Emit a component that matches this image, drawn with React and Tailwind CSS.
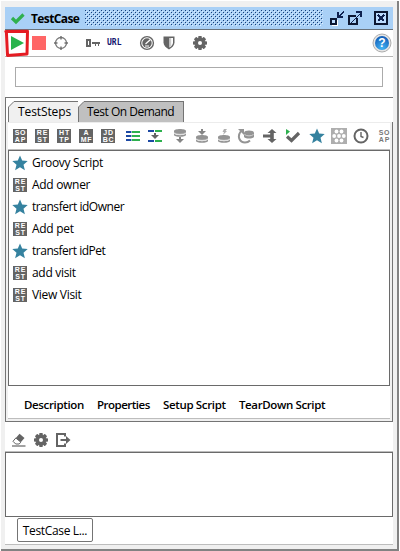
import React from "react";

const Star = () => (
  <svg className="size-4 shrink-0" viewBox="0 0 16 16">
    <path fill="#35829f" d="M8 .6l2.200 4.900 5.500.4-4.200 3.800 1.400 5.500L8 12.300l-4.900 2.900 1.400-5.500L.3 5.900l5.500-.4z" />
  </svg>
);

const Chip = ({ a, b, ghost }) => (
  <span
    className={
      "flex h-[14px] w-[14px] shrink-0 flex-col items-center justify-center gap-px font-['Liberation_Sans',sans-serif] text-[7px] leading-[6px] font-bold tracking-[0.8px] " +
      (ghost ? "text-[#777]" : "bg-[#646464] text-white")
    }
  >
    <span className="block pl-px">{a}</span>
    <span className="block pl-px">{b}</span>
  </span>
);

const Gear = () => (
  <svg className="size-[14px] shrink-0" viewBox="0 0 14 14">
    <g fill="#646464">
      <rect x="5.200" width="3.600" height="14" rx=".8" />
      <rect x="5.200" width="3.600" height="14" rx=".8" transform="rotate(45 7 7)" />
      <rect x="5.200" width="3.600" height="14" rx=".8" transform="rotate(90 7 7)" />
      <rect x="5.200" width="3.600" height="14" rx=".8" transform="rotate(135 7 7)" />
      <circle cx="7" cy="7" r="5.200" />
    </g>
    <circle cx="7" cy="7" r="2" fill="#fff" />
  </svg>
);

const Disk = ({ y }) => (
  <g fill="#949494">
    <path d={`M2 ${y + 2}c0-2.7 12-2.7 12 0v1.3c0 2.7-12 2.7-12 0z`} />
    <path d={`M2 ${y + 4.5}c2 2.2 10 2.2 12 0v1.3c0 2.7-12 2.7-12 0z`} />
    <path d={`M2.3 ${y + 3.8}c2 2 9.4 2 11.4 0`} fill="none" stroke="#ddd" strokeWidth=".7" />
  </g>
);

const Icon = ({ children, className = "" }) => (
  <svg className={"h-4 w-4 shrink-0 " + className} viewBox="0 0 16 16">{children}</svg>
);

const Cell = ({ children, className = "" }) => (
  <span className={"flex h-full w-[22px] shrink-0 items-center justify-center " + className}>{children}</span>
);

const TitleBar = () => (
  <div className="flex h-[23px] shrink-0 items-center border-b border-[#69737c] bg-[#a9d0f6]">
    <svg className="ml-[5px] h-[14px] w-[16px] shrink-0" viewBox="0 0 16 14">
      <path d="M2 7l4 4 7.500-7.500" fill="none" stroke="#2fb04e" strokeWidth="3.200" />
    </svg>
    <span className="ml-[5px] w-[54px] shrink-0 pt-px text-[12px] leading-[20px] font-bold tracking-[-0.6px] whitespace-nowrap">TestCase</span>
    <svg className="h-[16px] w-[238px] shrink-0" shapeRendering="crispEdges">
      <defs>
        <pattern id="grip" width="4" height="4" patternUnits="userSpaceOnUse">
          <rect width="1" height="1" fill="#173f78" />
          <rect x="2" y="2" width="1" height="1" fill="#173f78" />
          <rect x="1" y="1" width="1" height="1" fill="#dceeff" />
          <rect x="3" y="3" width="1" height="1" fill="#dceeff" />
        </pattern>
      </defs>
      <rect width="238" height="16" fill="url(#grip)" />
    </svg>
    <svg className="ml-[7px] h-[15px] w-[14px] shrink-0" viewBox="0 0 14 15" shapeRendering="crispEdges">
      <rect x="2" y="9" width="6" height="6" fill="#fff" />
      <path d="M0 7h7v7H0zM2 9v3h3V9z" fill="#0c1732" fillRule="evenodd" />
      <rect x="2" y="9" width="3" height="3" fill="#bcdcff" />
      <path d="M7 1h2v3h1V3h1V2h1V1h1V0h1v2h-1v1h-1v1h-1v1h2v2H7z" fill="#102250" />
    </svg>
    <svg className="ml-[4px] h-[15px] w-[15px] shrink-0" viewBox="0 0 15 15" shapeRendering="crispEdges">
      <path d="M0 4h8v2H2v6h6V7h2v7H0z" fill="#0c1732" />
      <path d="M3 11h1v-1h1V9h1V8h1V7h1V6h1V5h1V4h1V3h1V2H8V0h6v6h-2V4h-1v1h-1v1H9v1H8v1H7v1H6v1H5v1H4v1H3z" fill="#102250" />
    </svg>
    <svg className="ml-[11px] h-[14px] w-[14px] shrink-0" viewBox="0 0 14 14" shapeRendering="crispEdges">
      <rect x="1" y="1" width="12" height="12" fill="#bcdcff" stroke="#0c1732" strokeWidth="1.600" />
      <path d="M4 4l6 6M10 4l-6 6" stroke="#102250" strokeWidth="2" />
    </svg>
  </div>
);

const RunBar = () => (
  <div className="flex h-[27px] shrink-0 items-center border-b border-[#b5b5b5] bg-white">
    <span className="relative flex h-full w-[24px] shrink-0 items-center">
      <svg className="ml-[5px] h-[14px] w-[14px]" viewBox="0 0 14 14">
        <path d="M1 0l13 7-13 7z" fill="#29b34c" />
      </svg>
      <svg className="absolute -top-px -left-px h-[29px] w-[26px]" viewBox="0 0 26 29">
        <path d="M1.800 2.500L23.500 2.200 23 25 3.500 26.500 2.400 3" fill="none" stroke="#e51c23" strokeWidth="3" strokeLinejoin="round" strokeLinecap="round" />
      </svg>
    </span>
    <span className="ml-[3px] h-[14px] w-[14px] shrink-0 bg-[#ff6666]" />
    <Icon className="ml-[7px]">
      <circle cx="8" cy="8" r="5.500" fill="none" stroke="#787878" strokeWidth="1.300" />
      <path d="M8 1v3.500M8 11.500V15M1 8h3.500M11.500 8H15" stroke="#707070" strokeWidth="1.400" />
    </Icon>
    <svg className="ml-[17px] h-[10px] w-[14px] shrink-0" viewBox="0 0 14 10" shapeRendering="crispEdges">
      <path fill="#646464" fillRule="evenodd" d="M0 1h5v8H0zM2 3v4h1V3zM6 4h8v2H6zM9 6h1v2H9zM12 6h1v2h-1z" />
    </svg>
    <span className="ml-[7px] w-[17px] shrink-0 pb-px font-['DejaVu_Sans_Mono',monospace] text-[8px] leading-none font-bold whitespace-nowrap text-[#14146e]">URL</span>
    <Icon className="ml-[15px]">
      <circle cx="8" cy="8" r="6.400" fill="#fff" stroke="#646464" strokeWidth="1.400" />
      <circle cx="8" cy="8" r="4.700" fill="#646464" />
      <path d="M6.500 9l5-4.500" stroke="#fff" strokeWidth="1.200" />
      <path d="M6 11h4" stroke="#fff" />
    </Icon>
    <Icon className="ml-[6px]">
      <path d="M2.500 1.500h11v6c0 3-2.500 5.300-5.500 7-3-1.700-5.500-4-5.500-7z" fill="#646464" />
      <path d="M8.500 3H12v4.500c0 2.200-1.500 3.700-3.500 5z" fill="#fff" />
      <path d="M8.500 3h1.700v8.300l-1.700 1.200z" fill="#ccc" />
    </Icon>
    <span className="ml-[16px] flex"><Gear /></span>
    <svg className="mr-[1px] ml-auto h-[20px] w-[20px] shrink-0" viewBox="0 0 20 20">
      <defs>
        <radialGradient id="help" cx=".5" cy=".85" r=".8">
          <stop offset="0" stopColor="#43b5f5" />
          <stop offset="1" stopColor="#135fb9" />
        </radialGradient>
      </defs>
      <circle cx="10" cy="10" r="9" fill="#e6e6e6" stroke="#adadad" strokeWidth="1" />
      <circle cx="10" cy="10" r="7" fill="url(#help)" />
      <text x="10" y="14.300" textAnchor="middle" fill="#fff" className="font-['Liberation_Sans',sans-serif] text-[12px] font-bold">?</text>
    </svg>
  </div>
);

const StepBar = () => (
  <div className="flex h-[28px] shrink-0 items-center overflow-hidden border-t border-b border-t-[#ececec] border-b-[#bdbdbd] bg-white pl-px">
    <Cell><Chip a="SO" b="AP" /></Cell>
    <Cell><Chip a="RE" b="ST" /></Cell>
    <Cell><Chip a="HT" b="TP" /></Cell>
    <Cell><Chip a="A" b="MF" /></Cell>
    <Cell><Chip a="JD" b="BC" /></Cell>
    <Cell className="ml-[3px]">
      <Icon>
        <g shapeRendering="crispEdges">
          <path d="M1 3h6v2H1zM1 7h6v2H1zM1 11h6v2H1z" fill="#1c49a3" />
          <path d="M7 3h8v2H7zM7 7h8v2H7zM7 11h8v2H7z" fill="#2db04e" />
          <path d="M6 3h1v2H6zM6 7h1v2H6zM6 11h1v2H6z" fill="#9bc" />
        </g>
      </Icon>
    </Cell>
    <Cell>
      <Icon>
        <g shapeRendering="crispEdges">
          <path d="M1 2h6v2H1zM1 12h6v2H1z" fill="#1c49a3" />
          <path d="M8 2h7v2H8zM8 12h7v2H8z" fill="#2db04e" />
        </g>
        <path d="M7 5h2v2h3l-4 4-4-4h3z" fill="#646464" />
      </Icon>
    </Cell>
    <Cell className="ml-[3px]">
      <Icon>
        <Disk y={1} />
        <path d="M7 9h2v2h3l-4 4-4-4h3z" fill="#858585" />
      </Icon>
    </Cell>
    <Cell>
      <Icon>
        <Disk y={7} />
        <path d="M7 1h2v2h3L8 7 4 3h3z" fill="#858585" />
      </Icon>
    </Cell>
    <Cell>
      <Icon>
        <Disk y={7} />
        <path d="M8 1h3L9.500 3H11L7 7l1-3H6.500z" fill="#b0b0b0" />
      </Icon>
    </Cell>
    <Cell>
      <svg className="h-4 w-[18px] shrink-0" viewBox="0 0 18 16">
        <path d="M4 3C-.5 9 3 14.500 8 14.500c2.500 0 4-1 5-2" fill="none" stroke="#949494" strokeWidth="2" />
        <path d="M1 1h6v6z" fill="#949494" />
        <path d="M7 4.500c0-2.700 10-2.700 10 0v4c0 2.700-10 2.700-10 0z" fill="#949494" />
        <path d="M7.500 6.500c2 1.800 7 1.800 9 0" fill="none" stroke="#ddd" strokeWidth=".8" />
      </svg>
    </Cell>
    <Cell className="ml-[2px]">
      <Icon>
        <path d="M10 1l4.500 4h-2.700v6h2.700L10 15l-4.500-4h2.700V9.500H1v-3h7.200V5H5.500z" fill="#646464" />
      </Icon>
    </Cell>
    <Cell className="ml-px">
      <Icon>
        <path d="M1 1l4 2.500L1 7z" fill="#2db04e" />
        <path d="M2 8.500l4.500 4L14 5" fill="none" stroke="#646464" strokeWidth="3.200" />
      </Icon>
    </Cell>
    <Cell className="ml-[2px]"><Star /></Cell>
    <Cell>
      <Icon>
        <rect width="16" height="16" fill="#aeaeae" />
        <g fill="#fff">
          <circle cx="5.500" cy="3.500" r="1.900" /><circle cx="10.500" cy="3.500" r="1.900" />
          <circle cx="3.200" cy="8" r="1.900" /><circle cx="8" cy="8" r="1.900" /><circle cx="12.800" cy="8" r="1.900" />
          <circle cx="5.500" cy="12.500" r="1.900" /><circle cx="10.500" cy="12.500" r="1.900" />
        </g>
      </Icon>
    </Cell>
    <Cell>
      <Icon>
        <circle cx="8" cy="8" r="6.500" fill="none" stroke="#646464" strokeWidth="2" />
        <path d="M8 4v4.500l2.500 1" fill="none" stroke="#646464" strokeWidth="1.400" />
      </Icon>
    </Cell>
    <Cell className="ml-[1px]"><Chip a="SO" b="AP" ghost /></Cell>
  </div>
);

const steps = [
  ["star", "Groovy Script", "tracking-[-0.32px]"],
  ["rest", "Add owner", "tracking-[-0.3px]"],
  ["star", "transfert idOwner", "tracking-[-0.46px]"],
  ["rest", "Add pet", "tracking-[-0.3px]"],
  ["star", "transfert idPet", "tracking-[-0.48px]"],
  ["rest", "add visit", "tracking-[-0.3px]"],
  ["rest", "View Visit", "tracking-[-0.3px]"],
];

const TabCorner = ({ fill }) => (
  <svg className="h-[21px] w-[6px] shrink-0" viewBox="0 0 6 21">
    <path d="M.5 21V6L6 .5V21z" fill={fill} />
    <path d="M.5 21V6L6 .5" fill="none" stroke="#747474" />
  </svg>
);

export default function App() {
  return (
    <div className="flex h-[551px] w-[400px] overflow-hidden bg-white pt-[1px] pr-px pl-px font-['Open_Sans','Noto_Sans',sans-serif] text-[12px] text-black">
      <div className="flex w-[398px] flex-col border-r-2 border-b-2 border-[#828282] bg-[#f0f0f0] pt-[6px] pr-[4px] pb-[4px] pl-[4px]">
        <div className="flex min-h-0 flex-1 flex-col border-b border-[#bdbdbd] bg-white">
          <TitleBar />
          <RunBar />
          <div className="h-[40px] shrink-0 px-[10px] pt-[10px]">
            <div className="h-[20px] w-[368px] border border-[#ababab]" />
          </div>
          <div className="flex h-[325px] shrink-0 flex-col border border-[#747474] bg-[#f0f0f0] pr-[2px] pl-[2px]">
            <div className="-mr-[3px] -ml-[2px] flex h-[24px] shrink-0 items-end bg-white pl-[2px]">
              <div className="flex h-[21px] w-[70px]">
                <TabCorner fill="#f0f0f0" />
                <div className="flex flex-1 items-center border-t border-[#747474] bg-[#f0f0f0] pl-[4px] tracking-[-0.1px]">
                  <span className="whitespace-nowrap">TestSteps</span>
                </div>
              </div>
              <div className="flex h-[21px] w-[106px]">
                <TabCorner fill="#c0c0c0" />
                <div className="flex flex-1 items-center border-t border-r border-[#747474] bg-[#c0c0c0] pl-[3px] tracking-[-0.5px]">
                  <span className="whitespace-nowrap">Test On Demand</span>
                </div>
              </div>
            </div>
            <StepBar />
            <div className="flex h-[236px] shrink-0 flex-col border border-[#6a6a6a] bg-white pt-px">
              {steps.map(([kind, label, tracking], i) => (
                <div key={i} className="flex h-[22px] items-center pl-[3px]">
                  <span className="flex w-4 justify-center">{kind === "star" ? <Star /> : <Chip a="RE" b="ST" />}</span>
                  <span className={"ml-[4px] whitespace-nowrap " + tracking}>{label}</span>
                </div>
              ))}
            </div>
            <div className="flex h-[33px] shrink-0 items-center border-b border-[#bdbdbd] bg-white pt-[6px] pl-[16px] text-[11.5px] font-semibold whitespace-nowrap">
              <span className="w-[73px] tracking-[-0.35px]">Description</span>
              <span className="w-[66px] tracking-[-0.5px]">Properties</span>
              <span className="w-[76px] tracking-[-0.35px]">Setup Script</span>
              <span className="tracking-[-0.38px]">TearDown Script</span>
            </div>
          </div>
          <div className="flex h-[30px] shrink-0 items-center border-b border-[#bdbdbd] pt-[6px] pl-[6px]">
            <svg className="h-[14px] w-[15px] shrink-0" viewBox="0 0 15 14">
              <path d="M8.500.8l5 4.200-3.700 4.200-5-4.200z" fill="#646464" />
              <path d="M4.800 5l5 4.200-1.600 1.800H4.700L2 8.300z" fill="#fff" stroke="#646464" />
              <path d="M1 13h13.500" stroke="#646464" strokeWidth="1.200" />
            </svg>
            <span className="ml-[8px] flex"><Gear /></span>
            <svg className="ml-[8px] h-[14px] w-[15px] shrink-0" viewBox="0 0 15 14">
              <path d="M9 3.500V1H1v12h8v-2.500" fill="none" stroke="#646464" strokeWidth="2" />
              <path d="M4.500 7h6.500" stroke="#646464" strokeWidth="2" />
              <path d="M10 3l4.500 4-4.500 4z" fill="#646464" />
            </svg>
          </div>
          <div className="h-[65px] shrink-0 border border-[#6a6a6a] bg-white" />
          <div className="flex flex-1 items-start pt-px pl-[12px]">
            <div className="flex h-[24px] w-[76px] items-center justify-center rounded-[2px] border border-[#747474] pt-px tracking-[-0.35px] whitespace-nowrap">
              TestCase L...
            </div>
          </div>
        </div>
      </div>
    </div>
  );
}
